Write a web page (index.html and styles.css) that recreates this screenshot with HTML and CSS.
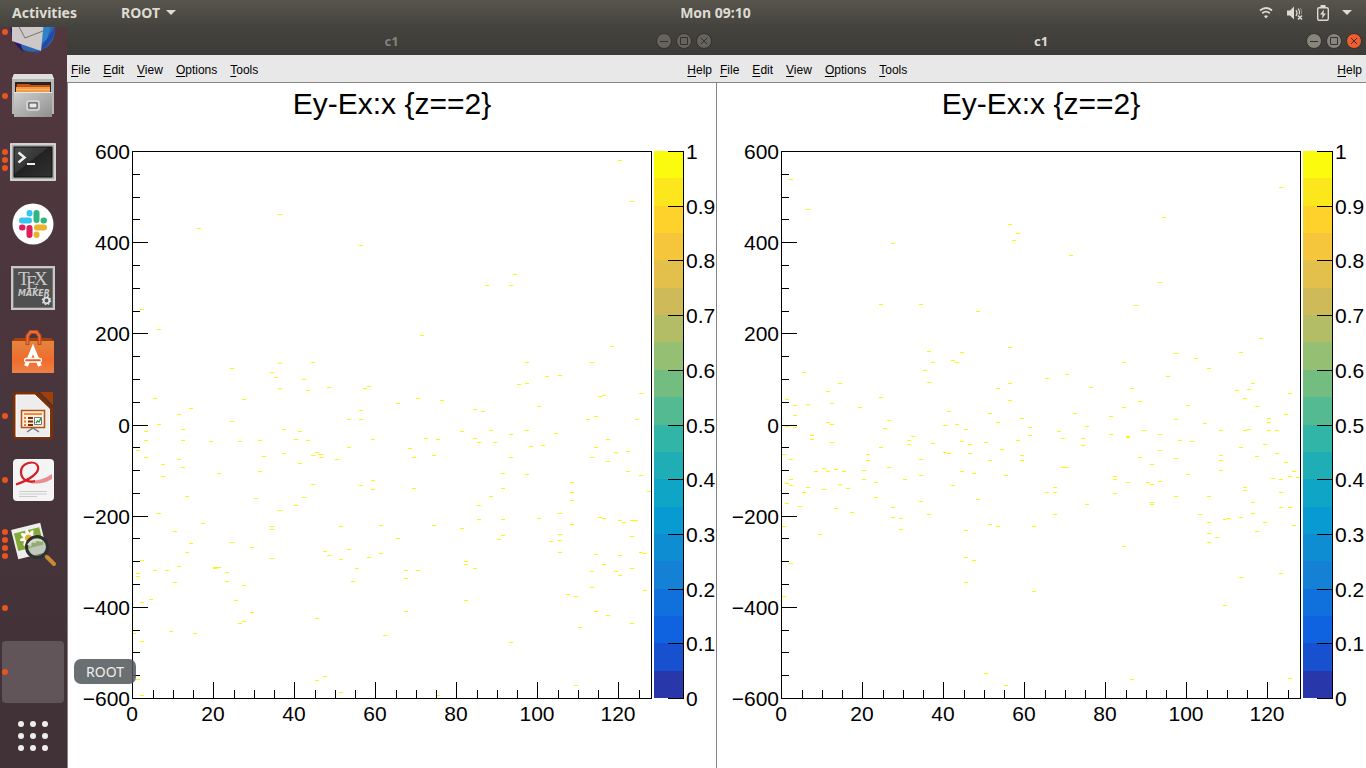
FILE: index.html
```html
<!DOCTYPE html>
<html lang="en">
<head>
<meta charset="utf-8">
<title>c1</title>
<link rel="stylesheet" href="styles.css">
</head>
<body>
<header class="topbar">
  <nav class="topbar-left">
    <button class="top-btn">Activities</button>
    <button class="top-btn app-menu">ROOT <svg width="10" height="6" viewBox="0 0 10 6"><path d="M0 0h10L5 5z" fill="currentColor"/></svg></button>
  </nav>
  <button class="top-btn clock">Mon 09:10</button>
  <button class="top-btn status" aria-label="System menu">
    <svg width="16" height="16" viewBox="0 0 16 16" fill="none" stroke="currentColor" stroke-width="1.8"><path d="M2 5.500Q8 .5 14 5.500"/><path d="M4.200 8.300Q8 5 11.800 8.300"/><path d="M6 11.200Q8 9.200 10 11.200L8 13.500Z" fill="currentColor" stroke="none"/></svg>
    <svg width="18" height="16" viewBox="0 0 18 16" fill="none" stroke="currentColor"><path d="M1 5.500h3l4-4v13l-4-4H1z" fill="currentColor" stroke="none"/><path d="M10 5q2 3 0 6M12 3.500q2.500 3.500 1 6" stroke-width="1.200"/><path d="M14.500 3q1.500 3 1 6" opacity=".45"/><path d="m12 10.500 4 4m0-4-4 4" stroke-width="1.500"/></svg>
    <svg width="14" height="16" viewBox="0 0 14 16" fill="none" stroke="currentColor"><rect x="1.700" y="2.700" width="10.600" height="12.600" rx="1.500" stroke-width="1.400"/><path d="M4.500 1h5" stroke-width="2"/><path d="M8 4.500 4 9.500h2.500L6 13.500l4-5H7.500z" fill="currentColor" stroke="none"/></svg>
    <svg width="10" height="6" viewBox="0 0 10 6"><path d="M0 0h10L5 5z" fill="currentColor"/></svg>
  </button>
</header>

<div class="desktop">
  <aside class="launcher" aria-label="Launcher">
    <button class="dock-item" aria-label="Mail">
      <span class="dots"><i></i></span>
      <svg width="48" height="48" viewBox="0 0 48 48"><circle cx="24" cy="22" r="22" fill="#2c66ad"/><path d="M1 17 3 30q5 10 12 14-3-5-3-8Z" fill="#2d176b"/><path d="M46 19q0 16-20 28 4-5 6-8Z" fill="#2449a8"/><path d="m34 12 9 2-5 17-7 6Z" fill="#2d83c8"/><path d="M3 12h32l-3 31L3 33Z" fill="#cfc8c9"/><path d="m9 17 7 13 18-7" fill="none" stroke="#77736f"/></svg>
    </button>
    <button class="dock-item" aria-label="Files">
      <span class="dots"><i></i></span>
      <svg width="48" height="48" viewBox="0 0 48 48"><defs><linearGradient id="cab" x2="1" y2="1"><stop stop-color="#cfcfcf"/><stop offset="1" stop-color="#8f8f8f"/></linearGradient></defs><path d="M5 2h38l2 5v35H3V7z" fill="#b7b7b7"/><path d="M5 2h38l2 5H3z" fill="#dfdfdf"/><path d="M6 10h36v11H6z" fill="#27221e"/><path d="M8 12h12l2 1h19v6H7z" fill="#c64f1b"/><path d="M7 15h34v5H7z" fill="#f8bb62"/><path d="M7 16h34M7 19h34" stroke="#ef7a26"/><path d="M5 20h38v25H5z" fill="url(#cab)"/><path d="M5 20.500h38" stroke="#e6e6e6"/><rect x="18" y="29" width="12" height="9" rx="2" fill="#999" stroke="#d0d0d0" stroke-width="2"/><path d="M20 31h8v5h-8z" fill="#e8e8e8" stroke="#555"/></svg>
    </button>
    <button class="dock-item" aria-label="Terminal">
      <span class="dots"><i></i><i></i><i></i></span>
      <svg width="48" height="48" viewBox="0 0 48 48"><defs><linearGradient id="term" x2="1" y2="1"><stop stop-color="#4a4d4b"/><stop offset=".45" stop-color="#353735"/><stop offset=".46" stop-color="#222"/><stop offset="1" stop-color="#303230"/></linearGradient></defs><rect x="1" y="7" width="46" height="38" rx="1" fill="#a8a8a8"/><path d="M2 8h44v36H2z" fill="none" stroke="#e0e0e0" stroke-width="1.500"/><path d="M5 11h38v30H5z" fill="url(#term)" stroke="#111"/><path d="m9.500 16.500 6 5-6 5" fill="none" stroke="#eee" stroke-width="2.500"/><path d="M18 28h8" stroke="#eee" stroke-width="2"/></svg>
    </button>
    <button class="dock-item" aria-label="Slack">
      <svg width="48" height="48" viewBox="0 0 48 48"><circle cx="24" cy="24" r="20.500" fill="#fff"/><g stroke-width="6" stroke-linecap="round"><path d="M13 20.500h7M20.500 13v.5" stroke="#36c5f0"/><path d="M27.500 13v7M34.500 20.500h.5" stroke="#2eb67d"/><path d="M35 27.500h-7M27.500 35v-.5" stroke="#ecb22e"/><path d="M20.500 35v-7M13 27.500h.5" stroke="#e01e5a"/></g></svg>
    </button>
    <button class="dock-item" aria-label="Texmaker">
      <svg width="48" height="48" viewBox="0 0 48 48"><path d="M2 2h44v44H2z" fill="#c8c8c8"/><path d="M4.500 4.500h39v39h-39z" fill="#505050" stroke="#777"/><g fill="#c9c9c9"><text x="9" y="21" class="tex-serif">T</text><text x="17" y="25" class="tex-serif">E</text><text x="25" y="21" class="tex-serif">X</text><text x="9" y="32" class="tex-maker">MAKER</text></g><circle cx="37.500" cy="36.500" r="2.800" fill="none" stroke="#ddd" stroke-width="1.800"/><circle cx="37.500" cy="36.500" r="4" fill="none" stroke="#ddd" stroke-width="1.500" stroke-dasharray="1.600 1.540"/></svg>
    </button>
    <button class="dock-item" aria-label="Ubuntu Software">
      <svg width="48" height="48" viewBox="0 0 48 48"><defs><linearGradient id="bag" x2="0" y2="1"><stop stop-color="#e2863f"/><stop offset=".6" stop-color="#f06b2c"/><stop offset="1" stop-color="#ed824a"/></linearGradient></defs><path d="m3 13 3-3h36l3 3z" fill="#a83d0e"/><path d="M3 13h42v32H3z" fill="url(#bag)"/><path d="M18.500 17V8l3-4h6l3 4v9" fill="none" stroke="#c2491a" stroke-width="4"/><path d="M18.500 16V8l3-4h6l3 4v8" fill="none" stroke="#e7703c" stroke-width="1.800"/><path d="m17 38 7-17 7 17" fill="none" stroke="#fff" stroke-width="4"/><rect x="15.500" y="30.500" width="17" height="3.500" rx="1.700" fill="#e95e20" stroke="#fff" stroke-width="1.300"/></svg>
    </button>
    <button class="dock-item" aria-label="Impress">
      <span class="dots"><i></i></span>
      <svg width="48" height="48" viewBox="0 0 48 48"><path d="M6 0h22l16 16v29q0 2-2 2H6q-2 0-2-2V2q0-2 2-2z" fill="#803000"/><path d="M31 0h12q1 0 1 1v12z" fill="#a33e05"/><path d="M7 3h19l14.500 14v27.500H7z" fill="#ededed" stroke="#fff"/><path d="M12.500 18.500h23v17h-23z" fill="#fbefdf" stroke="#b75216" stroke-width="1.500"/><path d="M15 22h18" stroke="#f28a3c" stroke-width="2"/><path d="M15 26h2m-2 3.500h2m-2 3.500h2" stroke="#f0782f" stroke-width="2"/><path d="M19 26h5m-5 3.500h5m-5 3.500h5" stroke="#7d2b00" stroke-width="2"/><path d="M25.500 25.500h7v7h-7z" fill="#fff" stroke="#777"/><path d="m27 31 1.500-2 1.500 1 2-4" fill="none" stroke="#289d45" stroke-width="1.500"/><path d="m18 40 6-4 6 4" fill="none" stroke="#777" stroke-width="1.500"/></svg>
    </button>
    <button class="dock-item" aria-label="PDF viewer">
      <span class="dots"><i></i></span>
      <svg width="48" height="48" viewBox="0 0 48 48"><rect x="4" y="3" width="41" height="42" rx="4" fill="#f4f4f4"/><path d="M21 25q12 0 22-7v5q-10 6-22 4z" fill="#ea8b8d"/><path d="M7 28.500C20 24 31 17 29 10.500C26 3 12 7 12 16C12 23 18 27 26 25" fill="none" stroke="#d41f26" stroke-width="2.200"/><path d="M10 35.500h28M10 38h28M10 40.500h18" stroke="#ccc"/></svg>
    </button>
    <button class="dock-item" aria-label="Image viewer">
      <span class="dots"><i></i><i></i><i></i><i></i></span>
      <svg width="48" height="48" viewBox="0 0 48 48"><g transform="rotate(-14 20 20)"><path d="M5 6h30v30H5z" fill="#eee"/><path d="M7 10h26v18H7z" fill="#83a936"/><g fill="#fff"><ellipse cx="20" cy="18" rx="2.500" ry="9"/><ellipse cx="20" cy="18" rx="9" ry="2.500"/><ellipse cx="20" cy="18" rx="2.500" ry="9" transform="rotate(45 20 18)"/><ellipse cx="20" cy="18" rx="2.500" ry="9" transform="rotate(-45 20 18)"/></g><circle cx="20" cy="18" r="3.500" fill="#efac23"/></g><circle cx="28" cy="27" r="10.500" fill="#9eae98" fill-opacity=".6" stroke="#2c302e" stroke-width="3"/><path d="m19 25q5-7 14-4" fill="none" stroke="#d7dfd2" stroke-width="2"/><path d="m36 35 3 3" stroke="#555" stroke-width="3"/><path d="m38 37 7 7" stroke="#c98a32" stroke-width="4" stroke-linecap="round"/></svg>
    </button>
    <button class="dock-item" aria-label="Window">
      <span class="dots"><i></i></span>
    </button>
    <button class="dock-item active" aria-label="ROOT">
      <span class="dots"><i></i></span>
      <span class="tooltip">ROOT</span>
    </button>
    <button class="dock-item" aria-label="Show Applications">
      <svg width="48" height="48" viewBox="0 0 48 48"><path d="M12 12h.01M24 12h.01M36 12h.01M12 24h.01M24 24h.01M36 24h.01M12 36h.01M24 36h.01M36 36h.01" stroke="#eeeeec" stroke-width="6" stroke-linecap="round"/></svg>
    </button>
  </aside>

  <main class="windows">
    <section class="window">
      <header class="titlebar">
        <h1 class="title">c1</h1>
        <div class="controls">
          <button class="ctl" aria-label="Minimize"><svg width="16" height="16" viewBox="0 0 16 16"><path d="M4 8.500h8"/></svg></button>
          <button class="ctl" aria-label="Maximize"><svg width="16" height="16" viewBox="0 0 16 16"><path d="M4.500 4.500h7v7h-7z"/></svg></button>
          <button class="ctl" aria-label="Close"><svg width="16" height="16" viewBox="0 0 16 16"><path d="m5 5 6 6m0-6-6 6"/></svg></button>
        </div>
      </header>
      <nav class="menubar">
        <button><u>F</u>ile</button><button><u>E</u>dit</button><button><u>V</u>iew</button><button><u>O</u>ptions</button><button><u>T</u>ools</button><button class="help"><u>H</u>elp</button>
      </nav>
      <div class="canvas"><svg class="plot" data-plot="0" viewBox="0 0 649 685" preserveAspectRatio="xMinYMin meet" role="img" aria-label="Ey-Ex:x {z==2}"></svg></div>
    </section>
    <section class="window focused">
      <header class="titlebar">
        <h1 class="title">c1</h1>
        <div class="controls">
          <button class="ctl" aria-label="Minimize"><svg width="16" height="16" viewBox="0 0 16 16"><path d="M4 8.500h8"/></svg></button>
          <button class="ctl" aria-label="Maximize"><svg width="16" height="16" viewBox="0 0 16 16"><path d="M4.500 4.500h7v7h-7z"/></svg></button>
          <button class="ctl close" aria-label="Close"><svg width="16" height="16" viewBox="0 0 16 16"><path d="m5 5 6 6m0-6-6 6"/></svg></button>
        </div>
      </header>
      <nav class="menubar">
        <button><u>F</u>ile</button><button><u>E</u>dit</button><button><u>V</u>iew</button><button><u>O</u>ptions</button><button><u>T</u>ools</button><button class="help"><u>H</u>elp</button>
      </nav>
      <div class="canvas"><svg class="plot" data-plot="1" viewBox="0 0 650 685" preserveAspectRatio="xMinYMin meet" role="img" aria-label="Ey-Ex:x {z==2}"></svg></div>
    </section>
  </main>
</div>
<script src="plot.js"></script>
</body>
</html>
```

FILE: styles.css
```css
* { box-sizing: border-box; }

html, body { height: 100%; }

body {
  margin: 0;
  display: flex;
  flex-direction: column;
  overflow: hidden;
  font-family: "Noto Sans", "Open Sans", sans-serif;
  background: #fff;
}

button {
  margin: 0;
  padding: 0;
  border: 0;
  background: none;
  color: inherit;
  font: inherit;
}

.topbar {
  flex: 0 0 27px;
  display: grid;
  grid-template-columns: 1fr auto 1fr;
  align-items: center;
  padding: 0 14px 2px 12px;
  background: linear-gradient(#58554d, #45433e);
  color: #dfdbd2;
  font-size: 14px;
  font-weight: 700;
  line-height: 18px;
}

.topbar-left { display: flex; gap: 44px; }
.app-menu { display: flex; align-items: center; gap: 6px; }
.clock { margin-left: 67px; }
.status { display: flex; align-items: center; justify-self: end; gap: 12px; }

.desktop { flex: 1; display: flex; min-height: 0; }

.launcher {
  position: relative;
  z-index: 2;
  flex: 0 0 67px;
  display: flex;
  flex-direction: column;
  justify-content: flex-end;
  background: linear-gradient(#52383e, #49353c 50%, #403236);
  clip-path: inset(0 -80px 0 0);
}

.dock-item {
  position: relative;
  flex: 0 0 64px;
  display: flex;
  align-items: center;
  justify-content: center;
  padding-right: 1px;
}

.dock-item.active::before {
  content: "";
  position: absolute;
  inset: 1px 3px 1px 2px;
  border-radius: 4px;
  background: rgba(255, 255, 255, .17);
}

.dots {
  position: absolute;
  left: 2px;
  top: 0;
  bottom: 0;
  display: flex;
  flex-direction: column;
  justify-content: center;
  gap: 2px;
}

.dots i { width: 6px; height: 6px; border-radius: 50%; background: #e95420; }

.tooltip {
  position: absolute;
  left: 74px;
  top: 19px;
  padding: 0 12px;
  border-radius: 7px;
  background: rgba(80, 86, 88, .85);
  color: #eee;
  font-size: 14px;
  line-height: 25px;
}

.tex-serif { font: 19px "Liberation Serif", serif; }
.tex-maker { font: italic 700 8px "DejaVu Sans", sans-serif; }

.windows { flex: 1; display: grid; grid-template-columns: 649fr 650fr; min-width: 0; }
.window { display: flex; flex-direction: column; min-width: 0; }

.titlebar {
  flex: 0 0 28px;
  display: grid;
  grid-template-columns: 1fr auto 1fr;
  align-items: center;
  padding: 0 4px;
  background: linear-gradient(#44433e, #3c3b37);
  color: #85827b;
}

.title { grid-column: 2; margin: 0; font-size: 13px; line-height: 18px; font-weight: 700; }
.controls { display: flex; justify-self: end; gap: 4px; }

.ctl {
  display: flex;
  width: 16px;
  height: 16px;
  border: 1px solid #33322e;
  border-radius: 50%;
  background: #65635c;
}

.ctl svg { flex: none; margin: -1px; fill: none; stroke: #33322e; }
.focused .titlebar { color: #dfdbd2; }
.focused .ctl { background: #87857c; }
.focused .ctl.close { background: #f15d2c; }

.menubar {
  flex: 0 0 28px;
  display: flex;
  align-items: center;
  gap: 13px;
  padding: 2px 4px 0;
  border-bottom: 1px solid #858585;
  background: #e8e8e8;
  color: #000;
  font: 12px/16px "Liberation Sans", sans-serif;
}

.menubar u { text-underline-offset: 2px; }
.help { margin-left: auto; }
.canvas { flex: 1; min-height: 0; background: #fff; box-shadow: inset 1px 0 #858585; }
.plot { display: block; width: 100%; height: 100%; font-family: "Liberation Sans", sans-serif; font-size: 21px; }
.plot-title { font-size: 30px; text-anchor: middle; }
.y-label { text-anchor: end; }
.x-label { text-anchor: middle; }
.axis { fill: none; stroke: #000; shape-rendering: crispEdges; }
.marks { fill: none; stroke: #fbf80a; shape-rendering: crispEdges; }
.band { shape-rendering: crispEdges; }
```

FILE: plot.js
```js
// Cells of the two histograms, grouped in quadrants: origin, then x,y of each cell.
const plots = [
  [
    { x: 63, y: 67, cells: "67,78 148,64 229,95 10,159 27,179 100,218 148,213 181,212 140,222 144,227 172,229 148,238 176,240 197,237 233,238 237,236 23,248 112,249 59,258 47,264 229,260 266,253 217,269 229,269 100,271 27,274 51,279 152,279" },
    { x: 328, y: 67, cells: "223,10 235,51 118,124 90,135 114,135 25,185 215,196 130,212 195,212 150,226 163,225 122,234 130,233 244,243 203,246 207,245 21,248 45,250 78,259 86,261 142,256 199,266 191,269 240,269" },
    { x: 63, y: 342, cells: "14,6 14,15 6,25 14,32 51,15 79,16 108,16 128,15 168,6 164,14 176,15 217,22 241,14 31,39 47,34 51,42 31,51 87,48 132,31 128,46 152,28 168,38 181,30 185,27 189,29 189,32 205,34 181,59 229,60 241,55 241,64 55,71 124,73 172,72 164,80 27,88 148,85 71,98 43,106 140,101 140,104 209,101 249,100 266,113 59,118 100,117 120,122 55,127 193,126 197,130 217,124 249,128 237,132 10,135 140,133 209,134 47,141 23,145 35,145 6,148 6,151 83,142 87,142 83,143 95,147 95,156 43,157 225,143 221,156 112,160 19,174 10,177 104,175 120,187 112,196 108,198 185,193 39,206 63,208 2,208 253,210 10,216 6,254 193,251 185,255 209,267 10,270" },
    { x: 328, y: 342, cells: "29,13 41,14 65,6 78,13 82,17 94,5 98,17 114,9 130,5 159,8 134,21 146,20 211,14 199,22 219,27 231,26 195,32 211,36 13,23 17,32 37,30 114,32 106,48 130,49 106,63 17,63 94,71 82,80 231,46 244,50 175,57 175,67 175,75 252,66 163,88 142,93 106,94 82,94 37,100 65,103 175,99 203,92 207,93 223,95 227,97 235,95 239,95 235,111 106,110 102,114 163,109 163,115 154,116 163,127 199,129 223,130 244,127 248,128 69,136 69,139 78,143 9,145 21,145 9,153 195,146 207,139 235,143 219,146 223,150 195,162 248,165 171,169 179,171 69,175 9,186 199,186 211,190 235,198 183,202 114,217 179,260 41,270" }
  ],
  [
    { x: 64, y: 67, cells: "9,29 26,59 228,74 236,83 232,90 111,93 99,154 139,154 196,161 228,197 147,201 180,202 151,212 171,210 175,212 143,220 22,222 147,232 58,233 228,233 265,228 216,238 46,241 5,249 99,247 228,250 13,255 26,254 50,253 78,257 167,261 208,263 13,265 107,270 46,272 50,274 240,268 216,272 163,275 175,274 248,277 5,276 13,277 103,278 184,279" },
    { x: 329, y: 67, cells: "234,37 117,67 24,105 113,132 89,155 214,188 129,203 194,202 149,208 77,212 162,218 20,224 121,226 44,237 85,238 206,233 190,240 202,239 243,243 198,248 93,251 77,257 141,255 210,256 28,263 64,266 222,268 239,264 129,269 222,272 158,273 40,276 202,279" },
    { x: 64, y: 342, cells: "30,10 30,14 50,17 131,11 127,15 127,19 151,18 99,22 180,16 188,19 204,17 236,15 248,10 220,24 163,27 167,28 188,28 240,30 240,35 208,35 2,29 9,34 86,29 86,35 139,34 107,42 34,46 42,43 46,46 54,44 62,46 82,45 82,54 123,54 139,50 180,46 192,48 224,50 9,54 5,58 9,60 94,57 58,59 171,60 26,62 22,67 42,64 66,63 265,67 94,72 196,74 5,78 18,81 54,83 70,87 111,82 139,76 147,89 111,92 119,93 119,104 184,105 208,99 216,101 252,101 2,101 38,109 184,132 192,135 9,138 184,157 252,166 2,171 204,248 224,260" },
    { x: 329, y: 342, cells: "12,6 16,13 36,13 36,20 64,9 81,11 81,12 97,5 113,9 133,15 145,16 113,25 174,5 198,5 222,5 230,5 194,22 218,19 230,28 174,30 174,35 210,31 93,32 129,33 105,39 239,37 174,45 141,49 247,46 16,42 20,42 68,51 68,54 81,57 101,57 105,59 113,56 226,53 234,54 243,51 251,52 8,62 8,67 68,68 129,71 162,71 198,62 198,65 234,67 40,79 105,77 105,79 206,77 234,82 243,82 8,89 153,89 206,88 194,92 178,94 182,93 162,97 218,97 247,100 210,106 162,108 170,112 162,117 77,121 234,148 194,152 178,180 85,254 243,253" }
  ]
];

const palette = ["#fbfb0d", "#fce61c", "#ffd12b", "#f5c63b", "#e2c04b", "#cfba59", "#b2bd65", "#95c073", "#74bd81", "#54ba91",
  "#30b5a6", "#1fadb6", "#0ea5c7", "#089bd1", "#0f8dd2", "#1480d6", "#1070dc", "#0f63e0", "#1751cf", "#2838aa"];

const frame = { left: 65, right: 584, top: 68, bottom: 615 };
const scale = { left: 587, right: 616 };

function draw(svg, quadrants) {
  const height = frame.bottom - frame.top;
  let out = `<text class="plot-title" x="325" y="31">Ey-Ex:x {z==2}</text>`;

  const marks = quadrants.map(q => q.cells.split(" ").map(c => {
    const [x, y] = c.split(",").map(Number);
    return `M${q.x + x} ${q.y + y + .5}h4`;
  }).join("")).join("");
  out += `<path class="marks" d="${marks}"/>`;

  palette.forEach((color, i) => {
    const y = Math.round(frame.top + i * height / 20);
    const end = Math.round(frame.top + (i + 1) * height / 20);
    out += `<rect class="band" x="${scale.left}" y="${y}" width="${scale.right - scale.left}" height="${end - y}" fill="${color}"/>`;
  });

  let lines = `M${frame.left + .5} ${frame.top + .5}H${frame.right + .5}V${frame.bottom + .5}H${frame.left + .5}Z`;
  lines += `M${scale.right + .5} ${frame.top}V${frame.bottom + 1}`;

  for (let i = 0; i <= 24; i++) {
    const y = Math.round(frame.top + i * height / 24);
    lines += `M${frame.left} ${y + .5}h${i % 4 ? 8 : 16}`;
    if (i % 4 === 0) {
      out += `<text class="y-label" x="63" y="${y + 8}">${String(600 - i * 50).replace("-", "−")}</text>`;
    }
  }
  for (let i = 0; i <= 25; i++) {
    const x = Math.round(65.4 + i * 20.25);
    lines += `M${x + .5} ${frame.bottom}v${i % 4 ? -8 : -16}`;
    if (i % 4 === 0) out += `<text class="x-label" x="${x}" y="638">${i * 5}</text>`;
  }
  for (let i = 0; i <= 10; i++) {
    const y = Math.round(frame.top + i * height / 10);
    lines += `M601 ${y + .5}h15`;
    out += `<text x="619" y="${y + 8}">${(10 - i) / 10}</text>`;
  }
  svg.innerHTML = out + `<path class="axis" d="${lines}"/>`;
}

document.querySelectorAll(".plot").forEach(svg => draw(svg, plots[svg.dataset.plot]));
```
